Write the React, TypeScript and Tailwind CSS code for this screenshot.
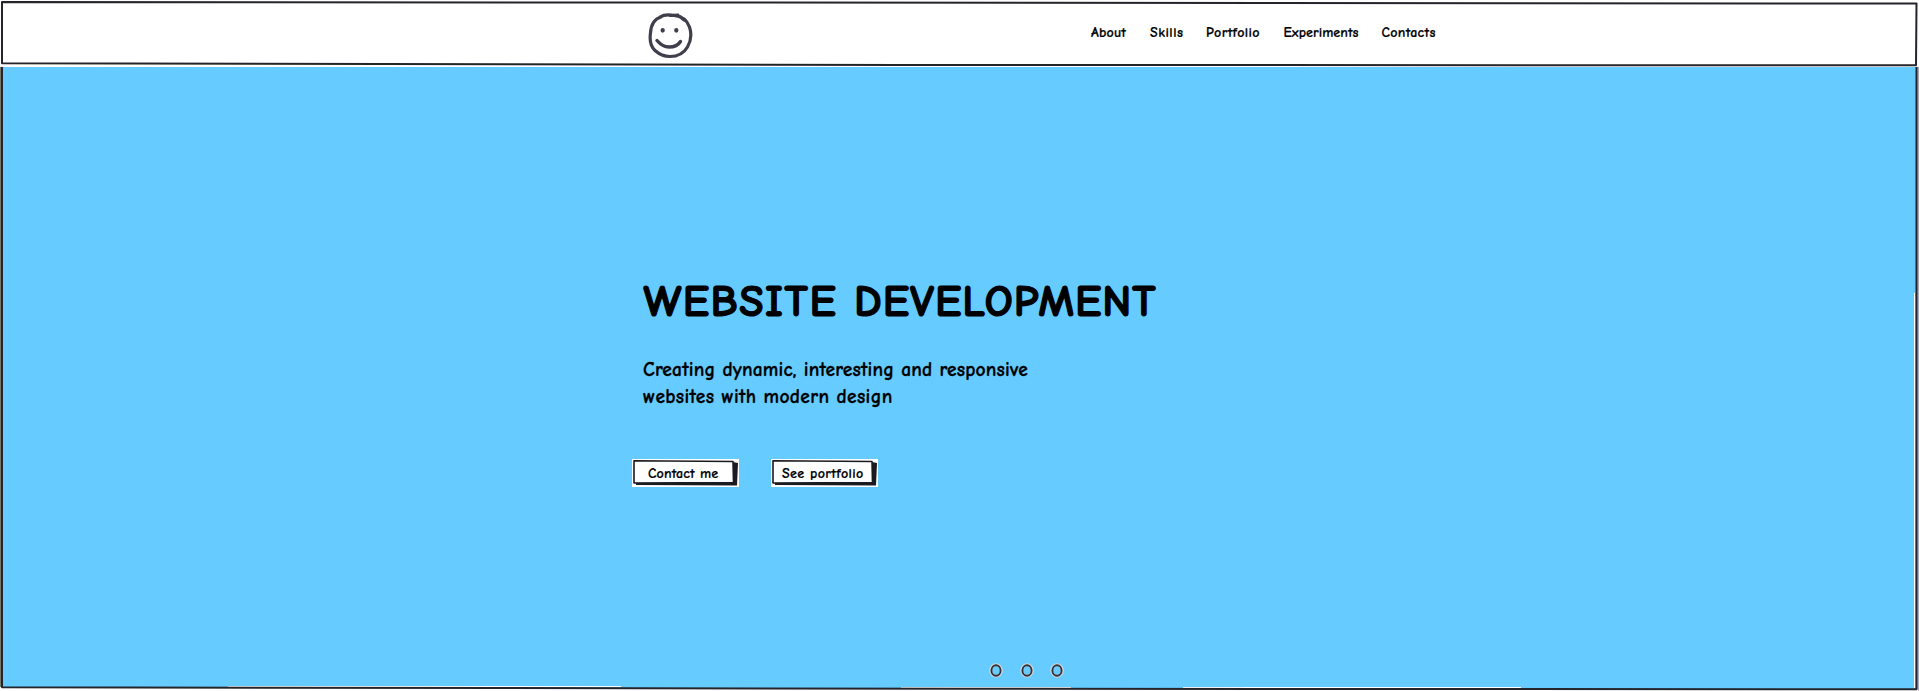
const hand = "font-['Comic_Sans_MS','Comic_Neue','Open_Sans',sans-serif] [stroke-linejoin:round]";

const links = [
  { label: "About", css: "w-[59px] tracking-[0.2px]" },
  { label: "Skills", css: "w-[56px] tracking-[0.5px]" },
  { label: "Portfolio", css: "w-[77.5px] tracking-[0.35px]" },
  { label: "Experiments", css: "w-[98px] tracking-[0.05px]" },
  { label: "Contacts", css: "w-[60px] tracking-[0.3px]" },
];

function Smiley() {
  return (
    <svg className="-ml-px" width="46" height="50" viewBox="0 0 46 50" fill="none" stroke="#3f3e4a" strokeLinecap="round" strokeLinejoin="round">
      <path d="M14 7C7 9 4 15 3.500 23C2.500 30 3 36 8 40.500C12 44 17 46.500 23 46.500C31 46.500 37 43 40.500 37C44.500 30 44.500 23 42.500 17C40 10 34 6 27 5.500C22 4.500 17 4.500 13 7" strokeWidth="3.200" />
      <path d="M23 5.500L31 5M33 6.500L37 10" strokeWidth="3" />
      <path d="M10 30.500C13 34 17 37 22 37C27 37 31 35.500 33.500 31.500" strokeWidth="3.400" />
      <path d="M15.700 20v.6M29.300 20v.6" strokeWidth="4.200" />
    </svg>
  );
}

function HeaderFrame() {
  return (
    <svg className="pointer-events-none absolute inset-0" width="1919" height="67" viewBox="0 0 1919 67" fill="none" stroke="#24242b" strokeWidth="2">
      <path d="M2 2L1916.500 3.500L1916 65.300L900 65L2 63.300Z" />
    </svg>
  );
}

function HeroFrame() {
  return (
    <svg className="pointer-events-none absolute inset-0" width="1919" height="624" viewBox="0 0 1919 624" fill="none">
      <path d="M0 620L1000 622H1919V624H0Z" fill="#fff" />
      <path d="M1914.500 226V621M228 619.500H621M901 620.500H1071M1183 620.500H1521" stroke="#fff" />
      <path d="M.5 0V620" stroke="#77776b" />
      <path d="M1918.500 0V624" stroke="#aaa9bd" />
      <path d="M2 0V620.300L960 621.800L1916.500 622.300V0" stroke="#24242b" strokeWidth="2" />
    </svg>
  );
}

function SketchButton({ label, css }: { label: string; css: string }) {
  return (
    <button className="relative h-7 w-[107px] bg-white">
      <svg className="absolute inset-0" width="107" height="28" viewBox="0 0 107 28">
        <path d="M101 3L106 4L105 26.500L4 26V23L101 24Z" fill="#1b1a20" />
        <path d="M2 1.800L101 2.500L101.500 23.500L2 24Z" fill="#fff" stroke="#1b1a20" strokeWidth="1.600" />
      </svg>
      <span className={`relative block whitespace-nowrap pt-px text-left text-[14px] leading-[27px] font-semibold [-webkit-text-stroke:0.2px_black] ${css}`}>{label}</span>
    </button>
  );
}

function Dot() {
  return (
    <svg width="14" height="15" viewBox="0 0 14 15" fill="none">
      <ellipse cx="7" cy="7.500" rx="5.300" ry="5.700" stroke="#d3d8da" strokeWidth="3" />
      <ellipse cx="7" cy="7.500" rx="4.600" ry="5.300" stroke="#33313a" strokeWidth="1.900" />
    </svg>
  );
}

export default function App() {
  return (
    <div className={`h-[691px] w-[1919px] overflow-hidden bg-white text-black ${hand}`}>
      <header className="relative flex h-[67px] pl-[648px] pt-[10px]">
        <HeaderFrame />
        <div className="w-[443px] shrink-0"><Smiley /></div>
        <nav className="flex pt-3">
          {links.map((l) => (
            <a key={l.label} className={`shrink-0 whitespace-nowrap text-[14px] leading-[21px] font-semibold [-webkit-text-stroke:0.2px_black] ${l.css}`}>{l.label}</a>
          ))}
        </nav>
      </header>
      <main className="relative h-[624px] bg-[#66cbff] pt-[205px]">
        <HeroFrame />
        <h1 className="ml-[643.5px] whitespace-nowrap text-[44.5px] leading-[60px] font-semibold tracking-[0.95px] [-webkit-text-stroke:1.2px_black]">
          <span className="tracking-[1.5px]">WEBSITE</span> DEVELOPMENT
        </h1>
        <p className="ml-[643px] mt-[24px] whitespace-nowrap text-[19.5px] leading-[27px] font-semibold tracking-[0.18px] [-webkit-text-stroke:0.3px_black]">
          Creating dynamic, interesting and responsive
          <br />
          <span className="tracking-[0.32px]">websites with modern design</span>
        </p>
        <div className="ml-[632px] mt-[49px] flex gap-8">
          <SketchButton label="Contact me" css="pl-4 tracking-[0.15px]" />
          <SketchButton label="See portfolio" css="pl-[11px] tracking-[0.4px]" />
        </div>
        <div className="ml-[989px] mt-[176px] flex gap-[16.5px]">
          <Dot />
          <Dot />
          <Dot />
        </div>
      </main>
    </div>
  );
}
